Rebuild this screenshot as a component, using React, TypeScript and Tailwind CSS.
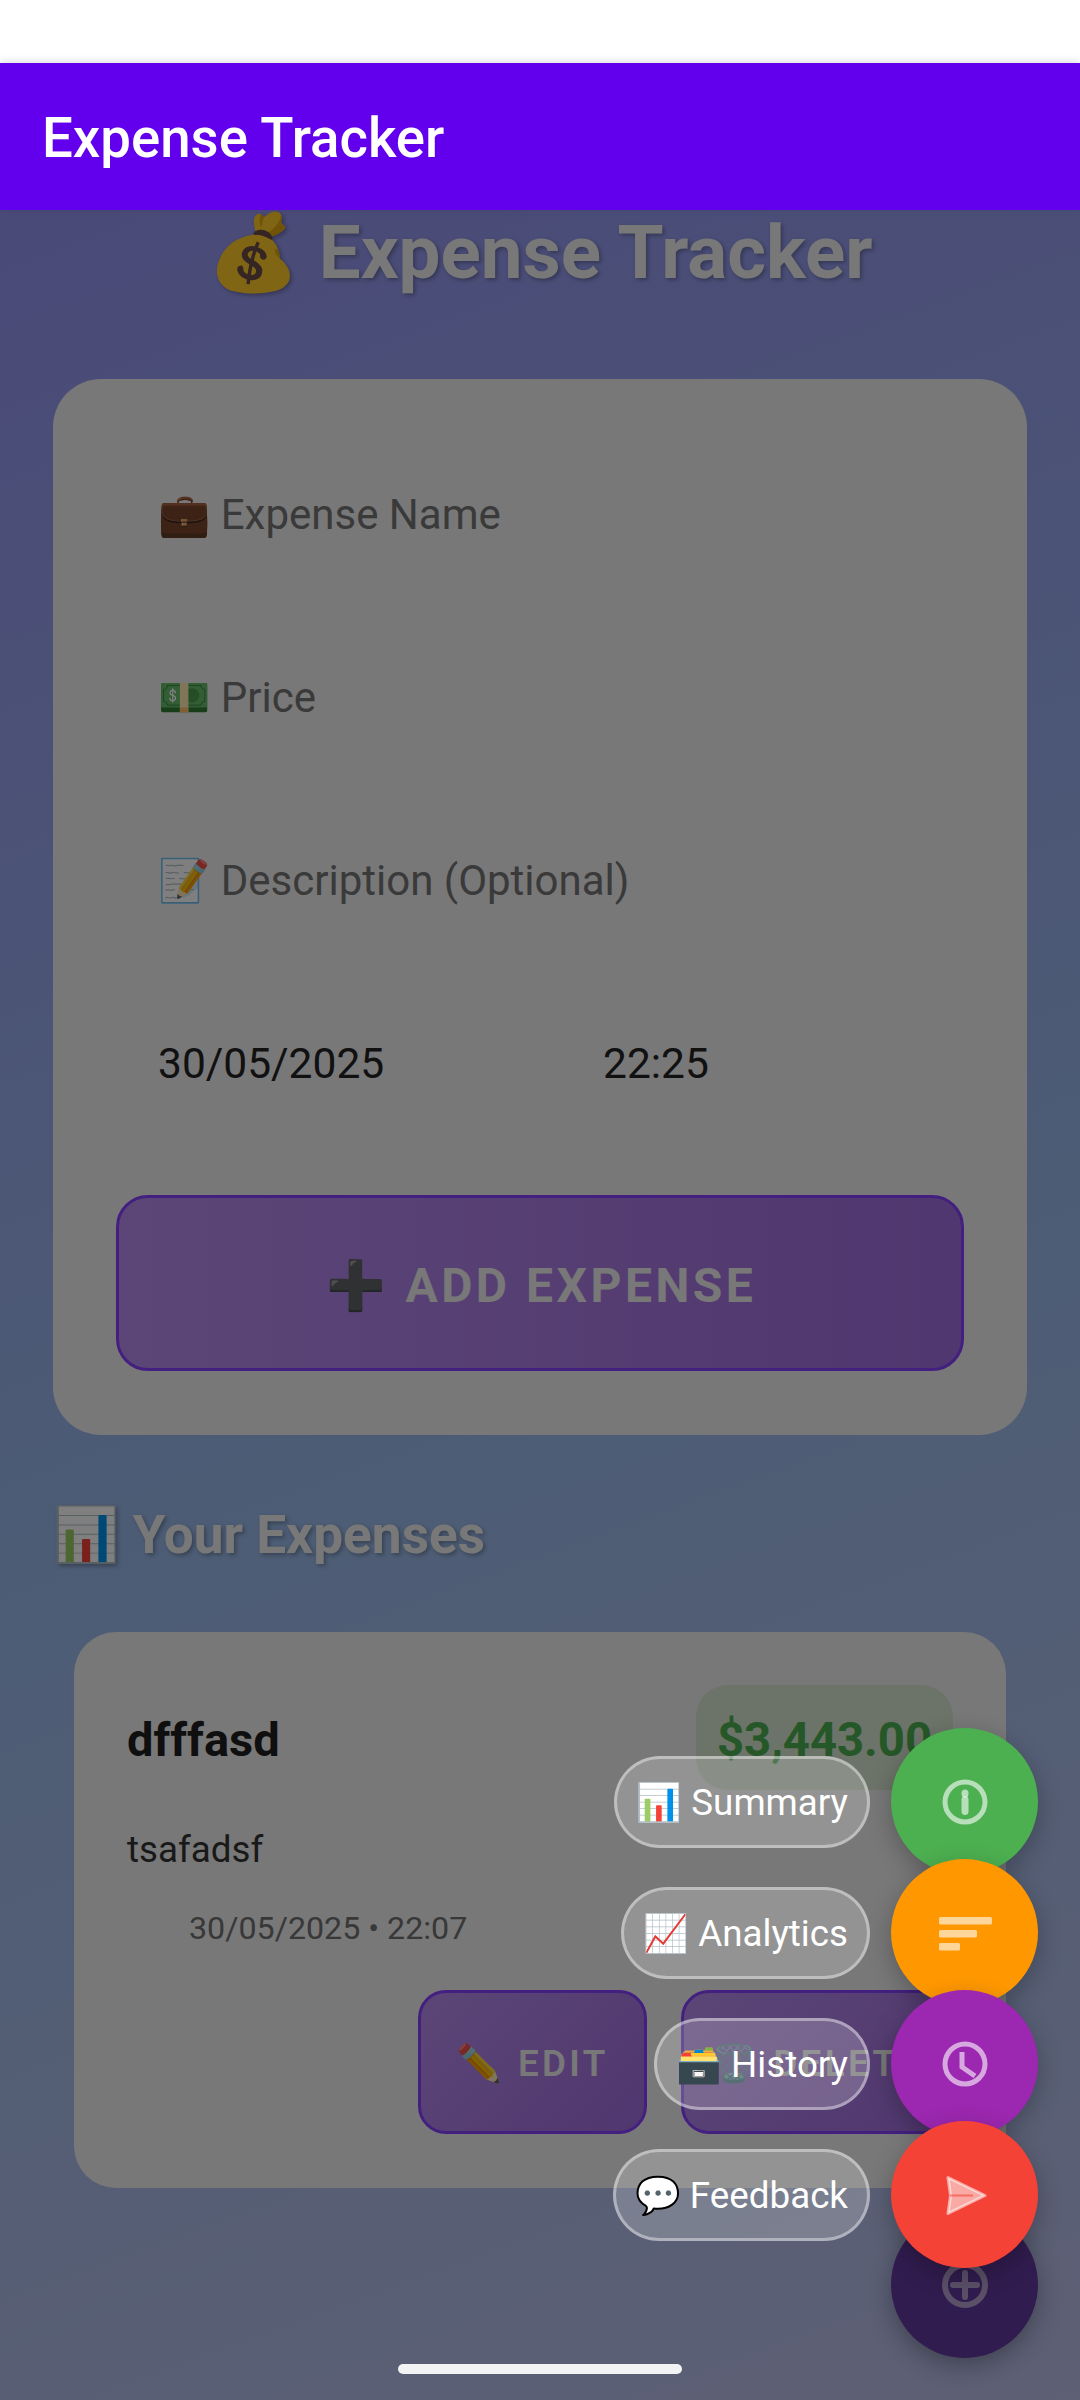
import type { ReactNode } from "react";

function FabRow({
  label,
  fabClass,
  children,
}: {
  label: string;
  fabClass: string;
  children: ReactNode;
}) {
  return (
    <div className="flex items-center justify-end h-[147px] mb-[-16px] gap-[21px]">
      <div className="h-[92px] flex items-center px-[19px] pt-[2px] rounded-full border-[3px] border-white/40 bg-white/20 text-white text-[36.75px] whitespace-nowrap">
        {label}
      </div>
      <div
        className={`w-[147px] h-[147px] rounded-full flex items-center justify-center shadow-[0_8px_24px_rgba(0,0,0,0.25)] ${fabClass}`}
      >
        {children}
      </div>
    </div>
  );
}

function FormRow({ children }: { children: ReactNode }) {
  return (
    <div className="h-[147px] mb-[36px] px-[42px] flex items-center text-[42px] text-[#747474]">
      {children}
    </div>
  );
}

export default function App() {
  return (
    <div className="relative w-[1080px] h-[2400px] overflow-hidden flex flex-col bg-white font-['Roboto','Noto_Color_Emoji',sans-serif]">
      <div className="h-[63px] shrink-0 bg-white" />
      <header className="h-[147px] shrink-0 z-10 bg-[#6200EE] flex items-center px-[42px] pt-[5px] shadow-[0_-2px_8px_rgba(0,0,0,0.12)]">
        <h1 className="text-white text-[54.6px] font-medium">Expense Tracker</h1>
      </header>

      <main className="relative flex-1 px-[53px] bg-[linear-gradient(160deg,#9494f0_0%,#9abaea_55%,#bcc0ea_100%)]">
        <h2 className="h-[86px] leading-[86px] text-center text-[74.5px] font-bold text-[#f0f0f0] [text-shadow:2px_2px_4px_rgba(0,0,0,0.3)]">
          💰 Expense Tracker
        </h2>

        <section className="mt-[83px] h-[1056px] rounded-[48px] bg-[#f0f0f0] px-[63px] pt-[62px]">
          <FormRow>💼 Expense Name</FormRow>
          <FormRow>💵 Price</FormRow>
          <FormRow>📝 Description (Optional)</FormRow>
          <div className="h-[147px] mb-[58px] flex items-center text-[42.5px] text-[#222222]">
            <span className="w-[445px] px-[42px]">30/05/2025</span>
            <span className="px-[42px]">22:25</span>
          </div>
          <button
            type="button"
            className="w-full h-[176px] pt-[6px] pl-[3px] rounded-[32px] border-[3px] border-[#8640fe] bg-[linear-gradient(90deg,#b88cee,#a06ede)] text-[#f0f0f0] text-[48px] font-bold tracking-[3.5px]"
          >
            ➕ ADD EXPENSE
          </button>
        </section>

        <h3 className="mt-[69px] h-[62px] leading-[62px] text-[53.2px] font-bold text-[#f0f0f0] [text-shadow:2px_2px_4px_rgba(0,0,0,0.3)]">
          📊 Your Expenses
        </h3>

        <article className="mt-[66px] mx-[21px] h-[556px] rounded-[42px] bg-[#f0f0f0] p-[53px] flex flex-col">
          <div className="flex items-center justify-between h-[105px] shrink-0">
            <span className="pt-[6px] text-[47px] font-bold text-[#1e1e1e]">dfffasd</span>
            <span className="h-[105px] w-[257px] pt-[6px] rounded-[32px] bg-[#d8e6d0] flex items-center justify-center text-[47.25px] font-bold text-[#4CAF50]">
              $3,443.00
            </span>
          </div>
          <p className="mt-[35px] h-[50px] leading-[50px] text-[36.75px] text-[#333333]">tsafadsf</p>
          <p className="mt-[31px] ml-[62px] h-[44px] leading-[44px] text-[32.2px] text-[#707070]">
            30/05/2025 • 22:07
          </p>
          <div className="mt-[40px] flex justify-end gap-[34px]">
            <button
              type="button"
              className="w-[229px] h-[144px] pt-[3px] rounded-[28px] border-[3px] border-[#8640fe] bg-[linear-gradient(135deg,#b88cee,#a06ede)] text-[#f0f0f0] text-[36.75px] font-semibold tracking-[3.4px]"
            >
              ✏️ EDIT
            </button>
            <button
              type="button"
              className="w-[272px] h-[144px] pt-[3px] rounded-[28px] border-[3px] border-[#8640fe] bg-[linear-gradient(135deg,#b88cee,#a06ede)] text-[#f0f0f0] text-[36.75px] font-semibold tracking-[3.4px]"
            >
              🗑️ DELETE
            </button>
          </div>
        </article>

        <div className="absolute right-[42px] bottom-[42px] w-[147px] h-[147px] rounded-full bg-[#62389e] flex items-center justify-center shadow-[0_8px_24px_rgba(0,0,0,0.3)]">
          <svg width="80" height="80" viewBox="0 0 80 80" fill="none" stroke="#b4a0d0" strokeWidth="6" strokeLinecap="round">
            <circle cx="40" cy="40" r="20" />
            <path d="M28 40h24M40 28v24" />
          </svg>
        </div>

        <div className="absolute inset-0 bg-black/50" />
      </main>

      <div className="absolute right-[42px] top-[1728px] flex flex-col">
        <FabRow label="📊 Summary" fabClass="bg-[#4CAF50]">
          <svg width="80" height="80" viewBox="0 0 80 80" fill="none" stroke="#fff" strokeOpacity="0.6" strokeWidth="5">
            <circle cx="40" cy="40" r="20" />
            <path d="M40 31v1" strokeWidth="7" strokeLinecap="round" />
            <path d="M40 37.5v12" strokeWidth="7" strokeLinecap="round" />
          </svg>
        </FabRow>
        <FabRow label="📈 Analytics" fabClass="bg-[#FF9800]">
          <svg width="80" height="80" viewBox="0 0 80 80" fill="#fff" fillOpacity="0.6">
            <rect x="14" y="24" width="53" height="7.5" rx="1.5" />
            <rect x="14" y="37" width="38" height="7.5" rx="1.5" />
            <rect x="14" y="50" width="21" height="7.5" rx="1.5" />
          </svg>
        </FabRow>
        <FabRow label="🗃️ History" fabClass="bg-[#9C27B0]">
          <svg width="80" height="80" viewBox="0 0 80 80" fill="none" stroke="#fff" strokeOpacity="0.6" strokeWidth="5">
            <circle cx="40" cy="40" r="20" />
            <path d="M37 28v15l13 9" />
          </svg>
        </FabRow>
        <FabRow label="💬 Feedback" fabClass="bg-[#F44336]">
          <svg width="80" height="80" viewBox="0 0 80 80">
            <path
              d="M23 22.5 60 40.5 23 58.5 25.5 40.5Z"
              fill="#fff"
              fillOpacity="0.55"
              stroke="#fff"
              strokeOpacity="0.55"
              strokeWidth="3"
              strokeLinejoin="round"
            />
            <path d="M25 40.5h23" stroke="#F44336" strokeOpacity="0.6" strokeWidth="2" />
          </svg>
        </FabRow>
      </div>

      <div className="absolute left-[398px] bottom-[26px] w-[284px] h-[10px] rounded-full bg-[#f2f3f5]" />
    </div>
  );
}
